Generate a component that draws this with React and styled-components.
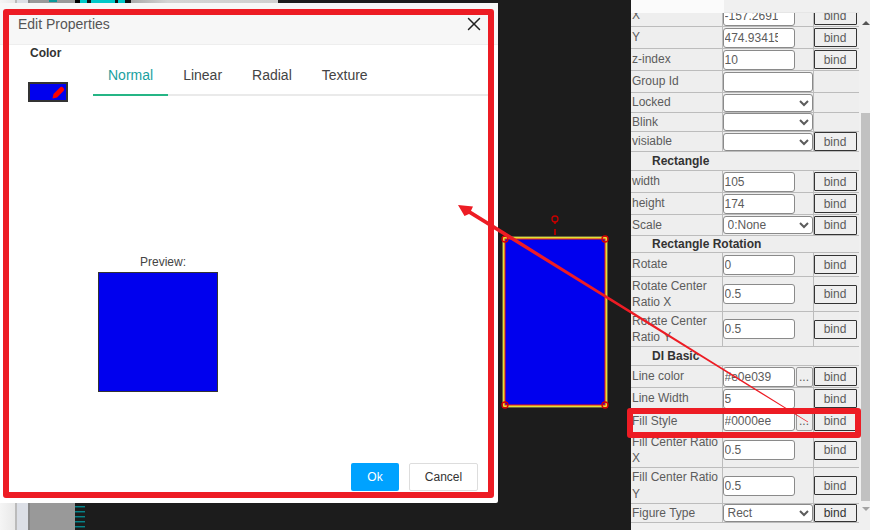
import React from 'react';
import styled, { createGlobalStyle } from 'styled-components';
import { X } from 'lucide-react';

const Global = createGlobalStyle`
  html, body { margin: 0; padding: 0; background: #1c1c1c; }
  body { font-family: "Liberation Sans", Arial, sans-serif; font-size: 12px; overflow: hidden; }
  * { box-sizing: border-box; }
`;

const Page = styled.div`
  position: relative;
  display: flex;
  width: 870px;
  height: 530px;
  overflow: hidden;
  background: #1c1c1c;
`;

/* left side, mostly hidden behind the dialog */
const Sidebar = styled.div`
  display: flex;
  flex: none;
  width: 75px;
`;

const Rail = styled.div`
  flex: none;
  width: ${(p) => p.$w}px;
  background: ${(p) => p.$bg};
`;

const Stage = styled.div`
  position: relative;
  display: flex;
  flex-direction: column;
  flex: none;
  width: 556px;
`;

const TopStrip = styled.div`
  display: flex;
  flex: none;
  height: 3px;
`;

const Ruler = styled.div`
  flex: 1;
  width: 10px;
  background: repeating-linear-gradient(
    to bottom,
    transparent 0 3px,
    #0b8288 3px 4px,
    #0a4b4e 4px 5px
  );
`;

const ShapeLayer = styled.svg`
  position: absolute;
  left: 420px;
  top: 210px;
`;

/* right property panel */
const Panel = styled.div`
  display: flex;
  flex: none;
  width: 239px;
  background: #f0f0f0;
`;

const PanelMain = styled.div`
  display: flex;
  flex-direction: column;
  flex: none;
  width: 228px;
`;

const PanelTabs = styled.div`
  flex: none;
  height: 13px;
  border-bottom: 1px solid #e6e6e6;
`;

const ActiveTab = styled.div`
  width: 93px;
  height: 13px;
  background: #fbfbfb;
`;

const TableClip = styled.div`
  flex: 1;
  overflow: hidden;
`;

const PropTable = styled.table`
  width: 228px;
  margin-top: -9px;
  table-layout: fixed;
  border-collapse: collapse;
  background: #eee;
  color: #5c5c5c;
  font-size: 12px;
`;

const Row = styled.tr`
  height: ${(p) => p.$h}px;
`;

const Cell = styled.td`
  height: ${(p) => p.$h}px;
  padding: 0;
  border: 1px solid #bcbcbc;
  vertical-align: middle;
  &:first-child { border-left: 0; }
`;

const LabelCell = styled(Cell)`
  padding-left: 1px;
  line-height: 16.5px;
`;

const SectionCell = styled(Cell)`
  padding-left: 21px;
  font-weight: bold;
  color: #333;
`;

const ValueWrap = styled.div`
  display: flex;
  align-items: center;
  gap: 1px;
`;

const TextInput = styled.input`
  flex: none;
  width: ${(p) => (p.$full ? 90 : 72)}px;
  height: 20px;
  padding: 1px ${(p) => (p.$number ? 16 : 2)}px 1px 1px;
  border: 1px solid #8a8a8a;
  border-radius: 3px;
  background: #fff;
  color: #5c5c5c;
  font: 12px "Liberation Sans", Arial, sans-serif;
  outline: none;
`;

const Picker = styled.select`
  display: block;
  width: 90px;
  height: 18px;
  border: 1px solid #8a8a8a;
  border-radius: 3px;
  background: #fff;
  color: #5c5c5c;
  font: 12px "Liberation Sans", Arial, sans-serif;
`;

const BindButton = styled.button`
  display: block;
  width: 43px;
  height: ${(p) => (p.$strong ? 18 : 19)}px;
  padding: 0;
  border: 1px solid #333;
  border-radius: 1px;
  background: #efefef;
  color: ${(p) => (p.$strong ? '#333' : '#5c5c5c')};
  font: 12px "Liberation Sans", Arial, sans-serif;
`;

const DotsButton = styled.button`
  flex: none;
  width: 17px;
  height: 20px;
  padding: 0;
  border: 1px solid #9a9a9a;
  border-radius: 2px;
  background: #efefef;
  color: #5c5c5c;
  font: 12px "Liberation Sans", Arial, sans-serif;
`;

const Scrollbar = styled.div`
  display: flex;
  flex-direction: column;
  align-items: center;
  flex: none;
  width: 11px;
  padding-top: 21px;
`;

const ArrowUp = styled.div`
  width: 0;
  height: 0;
  margin-left: 3px;
  border: 4px solid transparent;
  border-top: 0;
  border-bottom: 4px solid #555;
`;

const ArrowDown = styled.div`
  width: 0;
  height: 0;
  margin: 6px 0 0 3px;
  border: 4px solid transparent;
  border-bottom: 0;
  border-top: 4px solid #a3a3a3;
`;

const Thumb = styled.div`
  align-self: flex-end;
  width: 9px;
  height: 388px;
  margin-top: 88px;
  background: #c1c1c1;
`;

/* modal */
const Dialog = styled.div`
  position: absolute;
  left: 0;
  top: 3px;
  display: flex;
  flex-direction: column;
  width: 498px;
  height: 500px;
  border-radius: 0 0 2px 0;
  background: #fff;
`;

const DialogHeader = styled.div`
  display: flex;
  align-items: center;
  justify-content: space-between;
  flex: none;
  height: 42px;
  padding: 0 13px 0 18px;
  border-bottom: 1px solid #eee;
  background: #f7f7f7;
  color: #555;
  font-size: 14px;
`;

const DialogBody = styled.div`
  display: flex;
  flex: 1;
`;

const ColorColumn = styled.div`
  flex: none;
  width: 93px;
  padding: 1px 0 0 28px;
`;

const ColorTitle = styled.div`
  padding-left: 2px;
  color: #333;
  font-size: 12px;
  font-weight: bold;
  line-height: 14px;
`;

const Swatch = styled.div`
  display: flex;
  align-items: center;
  justify-content: flex-end;
  width: 40px;
  height: 20px;
  margin-top: 22px;
  padding-right: 1px;
  border: 2px solid #333;
  background: #0000ee;
`;

const EditorColumn = styled.div`
  flex: 1;
  padding: 15px 9px 0 0;
`;

const Tabs = styled.div`
  display: flex;
  height: 36px;
  border-bottom: 2px solid #eaeaea;
`;

const Tab = styled.div`
  height: 36px;
  padding: 0 15px;
  border-bottom: 2px solid ${(p) => (p.$active ? '#25b585' : 'transparent')};
  color: ${(p) => (p.$active ? '#1a9f9f' : '#444')};
  font-size: 14px;
  line-height: 30px;
`;

const PreviewBlock = styled.div`
  width: 120px;
  margin: 159px 0 0 5px;
`;

const PreviewCaption = styled.div`
  padding-left: 10px;
  margin-bottom: 3px;
  color: #444;
  font-size: 12px;
  line-height: 14px;
  text-align: center;
`;

const PreviewBox = styled.div`
  width: 120px;
  height: 120px;
  border: 1px solid #333;
  background: #0000ee;
`;

const DialogFooter = styled.div`
  display: flex;
  justify-content: flex-end;
  gap: 10px;
  flex: none;
  padding: 0 20px 12px 0;
`;

const OkButton = styled.button`
  width: 48px;
  height: 28px;
  padding: 0;
  border: 0;
  border-radius: 2px;
  background: #00a2ff;
  color: #fff;
  font: 12px "Liberation Sans", Arial, sans-serif;
`;

const CancelButton = styled.button`
  width: 69px;
  height: 28px;
  padding: 0;
  border: 1px solid #ddd;
  border-radius: 2px;
  background: #fff;
  color: #333;
  font: 12px "Liberation Sans", Arial, sans-serif;
`;

/* red marks drawn on top of the screenshot */
const Highlight = styled.div`
  position: absolute;
  left: ${(p) => p.$x}px;
  top: ${(p) => p.$y}px;
  width: ${(p) => p.$w}px;
  height: ${(p) => p.$h}px;
  border: 6px solid #ed1c24;
  border-radius: 3px;
`;

const ArrowLayer = styled.svg`
  position: absolute;
  left: 0;
  top: 0;
`;

const stripItems = [
  [5, '#000'], [7, '#00c8c8'], [4, '#111'], [24, '#00c8c8'], [3, '#111'],
  [7, '#00c8c8'], [6, '#111'],
];

const rows = [
  { h: 22, label: 'X', value: '-157.2691', number: true, bind: true },
  { h: 22, label: 'Y', value: '474.93415', number: true, bind: true },
  { h: 22, label: 'z-index', value: '10', number: true, bind: true },
  { h: 22, label: 'Group Id', value: '', full: true },
  { h: 20, label: 'Locked', select: '' },
  { h: 19, label: 'Blink', select: '' },
  { h: 20, label: 'visiable', select: '', bind: true },
  { h: 19, section: 'Rectangle' },
  { h: 22, label: 'width', value: '105', number: true, bind: true },
  { h: 22, label: 'height', value: '174', number: true, bind: true },
  { h: 21, label: 'Scale', select: '0:None', bind: true },
  { h: 17, section: 'Rectangle Rotation' },
  { h: 24, label: 'Rotate', value: '0', number: true, bind: true },
  { h: 35, label: 'Rotate Center Ratio X', value: '0.5', number: true, bind: true },
  { h: 35, label: 'Rotate Center Ratio Y', value: '0.5', number: true, bind: true },
  { h: 19, section: 'DI Basic' },
  { h: 22, label: 'Line color', value: '#e0e039', dots: true, bind: true },
  { h: 22, label: 'Line Width', value: '5', number: true, bind: true },
  { h: 23, label: 'Fill Style', value: '#0000ee', dots: true, bind: true },
  { h: 35, label: 'Fill Center Ratio X', value: '0.5', number: true, bind: true },
  { h: 36, label: 'Fill Center Ratio Y', value: '0.5', number: true, bind: true },
  { h: 19, label: 'Figure Type', select: 'Rect', bind: true, strong: true },
];

const corners = [[505, 239], [605, 239], [505, 405], [605, 405]];

const PropRow = ({ row }) => {
  if (row.section) {
    return (
      <Row $h={row.h}>
        <SectionCell $h={row.h} colSpan={3}>{row.section}</SectionCell>
      </Row>
    );
  }
  return (
    <Row $h={row.h}>
      <LabelCell $h={row.h}>{row.label}</LabelCell>
      <Cell $h={row.h}>
        {row.select !== undefined ? (
          <Picker defaultValue={row.select}>
            <option value={row.select}>{row.select}</option>
          </Picker>
        ) : (
          <ValueWrap>
            <TextInput readOnly value={row.value} $number={row.number} $full={row.full} />
            {row.dots && <DotsButton>...</DotsButton>}
          </ValueWrap>
        )}
      </Cell>
      <Cell $h={row.h}>{row.bind && <BindButton $strong={row.strong}>bind</BindButton>}</Cell>
    </Row>
  );
};

const App = () => {
  return (
    <Page>
      <Global />
      <Sidebar>
        <Rail $w={15} $bg="linear-gradient(to right, #f5f5f5, #e8e8e8)" />
        <Rail $w={2} $bg="#bbb" />
        <Rail $w={11} $bg="#dcdfe6" />
        <Rail $w={2} $bg="#888" />
        <Rail $w={45} $bg="linear-gradient(#0a9a9a, #0a9a9a) 19px 0 / 8px 2px no-repeat, #999" />
      </Sidebar>

      <Stage>
        <TopStrip>
          {stripItems.map(([w, bg], i) => (
            <Rail key={i} $w={w} $bg={bg} />
          ))}
          <Rail $w={147} $bg="linear-gradient(to right, #aaa, #d4d4d4 25%, #d0d0d0)" />
        </TopStrip>
        <Ruler />
        <ShapeLayer width="120" height="210" viewBox="495 210 120 210">
          <rect x="502.8" y="236.8" width="104.4" height="170.4" fill="#0000ee" stroke="#a8a030" strokeWidth="0.8" />
          <rect x="504" y="238" width="102" height="168" fill="none" stroke="#e0e039" strokeWidth="2" />
          <rect x="505" y="239" width="100" height="166" fill="none" stroke="#ee1a10" strokeWidth="1" />
          <line x1="555" y1="222" x2="555" y2="235" stroke="#a80000" strokeWidth="2" strokeDasharray="2 5 6" />
          <circle cx="555" cy="219" r="3" fill="#1c1c1c" stroke="#c80000" strokeWidth="1.3" />
          {corners.map(([cx, cy]) => (
            <circle key={cx + '-' + cy} cx={cx} cy={cy} r="3" fill="none" stroke="#d80000" strokeWidth="1.3" />
          ))}
        </ShapeLayer>
      </Stage>

      <Panel>
        <PanelMain>
          <PanelTabs>
            <ActiveTab />
          </PanelTabs>
          <TableClip>
            <PropTable>
              <colgroup>
                <col style={{ width: 91 }} />
                <col style={{ width: 91 }} />
                <col style={{ width: 46 }} />
              </colgroup>
              <tbody>
                {rows.map((row) => (
                  <PropRow key={row.label || row.section} row={row} />
                ))}
              </tbody>
            </PropTable>
          </TableClip>
        </PanelMain>
        <Scrollbar>
          <ArrowUp />
          <Thumb />
          <ArrowDown />
        </Scrollbar>
      </Panel>

      <Dialog>
        <DialogHeader>
          Edit Properties
          <X size={22} strokeWidth={1.6} color="#222" />
        </DialogHeader>
        <DialogBody>
          <ColorColumn>
            <ColorTitle>Color</ColorTitle>
            <Swatch>
              <svg width="13" height="13" viewBox="0 0 13 13">
                <path d="M0.5 12.5 L1.5 8 L8 1.5 Q9.5 0 11 1.5 L11.5 2 Q13 3.5 11.5 5 L5 11.5 Z" fill="#f00" />
              </svg>
            </Swatch>
          </ColorColumn>
          <EditorColumn>
            <Tabs>
              {['Normal', 'Linear', 'Radial', 'Texture'].map((name) => (
                <Tab key={name} $active={name === 'Normal'}>{name}</Tab>
              ))}
            </Tabs>
            <PreviewBlock>
              <PreviewCaption>Preview:</PreviewCaption>
              <PreviewBox />
            </PreviewBlock>
          </EditorColumn>
        </DialogBody>
        <DialogFooter>
          <OkButton>Ok</OkButton>
          <CancelButton>Cancel</CancelButton>
        </DialogFooter>
      </Dialog>

      <Highlight $x={3} $y={9} $w={491} $h={489} />
      <Highlight $x={627} $y={408} $w={234} $h={30} />
      <ArrowLayer width="870" height="530" viewBox="0 0 870 530">
        <polygon
          fill="#ed1c24"
          points="458,205 473,206.5 471,210.7 808.2,421.7 807.8,422.3 469,214.1 464.5,216"
        />
      </ArrowLayer>
    </Page>
  );
};

export default App;
